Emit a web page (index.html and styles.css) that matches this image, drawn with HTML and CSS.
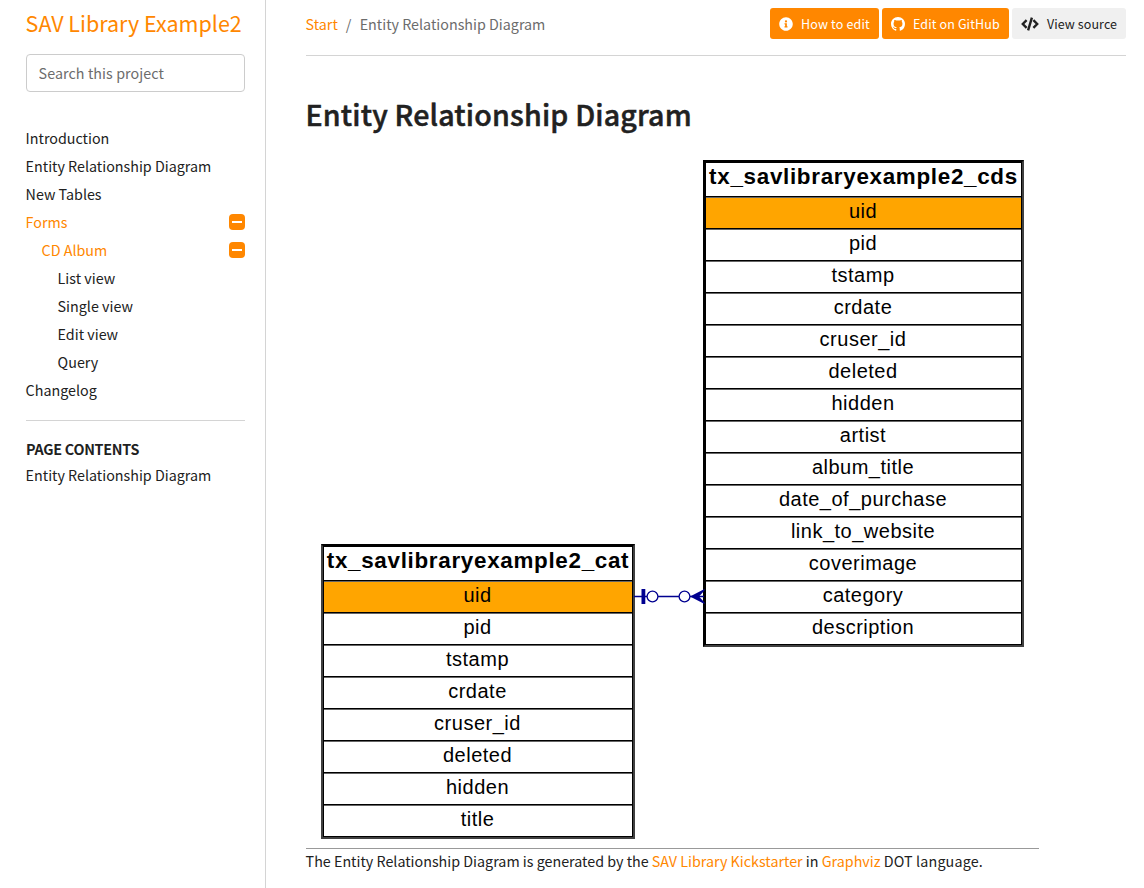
FILE: index.html
```
<!DOCTYPE html>
<html lang="en">
<head>
<meta charset="utf-8">
<title>Entity Relationship Diagram</title>
<link rel="stylesheet" href="styles.css">
</head>
<body>
<div class="page">
  <aside class="sidebar">
    <a class="brand"><span>SAV Library Example2</span></a>
    <input class="search" type="text" placeholder="Search this project">
    <nav class="menu">
      <a><span>Introduction</span></a>
      <a><span>Entity Relationship Diagram</span></a>
      <a><span>New Tables</span></a>
      <a class="active"><span>Forms</span><i class="toggle"></i></a>
      <a class="active level2"><span>CD Album</span><i class="toggle"></i></a>
      <a class="level3"><span>List view</span></a>
      <a class="level3"><span>Single view</span></a>
      <a class="level3"><span>Edit view</span></a>
      <a class="level3"><span>Query</span></a>
      <a><span>Changelog</span></a>
    </nav>
    <div class="contents">
      <p class="contents-title"><span>PAGE CONTENTS</span></p>
      <a><span>Entity Relationship Diagram</span></a>
    </div>
  </aside>
  <main class="main">
    <header class="topbar">
      <div class="crumbs"><a class="link">Start</a><span class="slash">/</span><span>Entity Relationship Diagram</span></div>
      <div class="buttons">
        <a class="btn"><svg width="14" height="14" viewBox="0 0 512 512"><path fill="currentColor" d="M256 8C119 8 8 119 8 256s111 248 248 248 248-111 248-248S393 8 256 8zm0 110a42 42 0 1 1 0 84 42 42 0 0 1 0-84zm56 254c0 7-5 12-12 12h-88c-7 0-12-5-12-12v-24c0-7 5-12 12-12h12v-64h-12c-7 0-12-5-12-12v-24c0-7 5-12 12-12h64c7 0 12 5 12 12v100h12c7 0 12 5 12 12v24z"/></svg><span>How to edit</span></a>
        <a class="btn btn-github"><svg width="14" height="14" viewBox="0 0 16 16"><path fill="currentColor" d="M8 0C3.58 0 0 3.58 0 8c0 3.54 2.29 6.53 5.47 7.59.4.07.55-.17.55-.38 0-.19-.01-.82-.01-1.49-2.01.37-2.53-.49-2.69-.94-.09-.23-.48-.94-.82-1.13-.28-.15-.68-.52-.01-.53.63-.01 1.08.58 1.23.82.72 1.21 1.87.87 2.33.66.07-.52.28-.87.51-1.07-1.78-.2-3.64-.89-3.64-3.95 0-.87.31-1.59.82-2.15-.08-.2-.36-1.02.08-2.12 0 0 .67-.21 2.2.82A7.6 7.6 0 0 1 8 3.86c.68 0 1.36.09 2 .27 1.53-1.04 2.2-.82 2.2-.82.44 1.1.16 1.92.08 2.12.51.56.82 1.27.82 2.15 0 3.07-1.87 3.75-3.65 3.95.29.25.54.73.54 1.48 0 1.07-.01 1.93-.01 2.2 0 .21.15.46.55.38A8.01 8.01 0 0 0 16 8c0-4.42-3.58-8-8-8z"/></svg><span>Edit on GitHub</span></a>
        <a class="btn btn-light"><svg width="18" height="14" viewBox="0 0 18 14"><g fill="none" stroke="currentColor" stroke-width="2.4"><path d="M5.6 3.1 1.8 7l3.8 3.9M12.4 3.1 16.2 7l-3.8 3.9M10.9.6 7.1 13.4"/></g></svg><span>View source</span></a>
      </div>
    </header>
    <h1><span>Entity Relationship Diagram</span></h1>
    <div class="diagram">
      <div class="entity cds">
        <b>tx_savlibraryexample2_cds</b>
        <span class="key">uid</span><span>pid</span><span>tstamp</span><span>crdate</span><span>cruser_id</span><span>deleted</span><span>hidden</span><span>artist</span><span>album_title</span><span>date_of_purchase</span><span>link_to_website</span><span>coverimage</span><span>category</span><span>description</span>
      </div>
      <div class="entity cat">
        <b>tx_savlibraryexample2_cat</b>
        <span class="key">uid</span><span>pid</span><span>tstamp</span><span>crdate</span><span>cruser_id</span><span>deleted</span><span>hidden</span><span>title</span>
      </div>
      <svg class="edge" width="72" height="20" viewBox="0 0 72 20"><g fill="none" stroke="#000090" stroke-width="1.3"><path d="M0 10.5h13M24 10.5h21M56 10.5h14"/><circle cx="18.5" cy="10.5" r="5.400"/><circle cx="50.500" cy="10.500" r="5.400"/></g><path fill="#000090" d="M7.500 3h3.800v15H7.500zM56 10.500 70.500 3v1.500L65 10.500l5.500 6V18z"/></svg>
    </div>
    <p class="note"><span>The Entity Relationship Diagram is generated by the <a class="link">SAV Library Kickstarter</a> in <a class="link">Graphviz</a> <span class="tail">DOT language.</span></span></p>
  </main>
</div>
</body>
</html>
```
FILE: styles.css
```
* { box-sizing: border-box; }
body { margin: 0; background: #fff; color: #212121; font: 14.3px/28px "Noto Sans CJK SC", sans-serif; }
.page { display: flex; height: 888px; overflow: hidden; }
.sidebar { width: 266px; flex: none; padding: 7px 20px 0 25.6px; border-right: 1px solid #d4d4d4; }
.brand { display: block; color: #ff8700; font-size: 21.5px; line-height: 32px; white-space: nowrap; }
.search { display: block; width: 219px; height: 38px; margin: 15px 0 32px 0.4px; padding: 0 11.6px 2px; border: 1px solid #ccc; border-radius: 4px; font: inherit; letter-spacing: 0.07px; color: #666; }
.search::placeholder { color: #6c6c6c; opacity: 1; }
.menu a { display: flex; justify-content: space-between; align-items: center; height: 28px; }
.menu .active, .link { color: #ff8700; }
.menu .level2 { padding-left: 16px; }
.menu .level3 { padding-left: 32px; }
.toggle { display: flex; align-items: center; justify-content: center; width: 16px; height: 16px; border-radius: 4px; background: #ff8700; }
.toggle::after { content: ""; width: 10px; height: 2px; background: #fff; }
.contents { margin: 16px 0 0 0.4px; padding-top: 15px; border-top: 1px solid #d4d4d4; line-height: 26px; }
.contents p { margin: 0; font-weight: 700; letter-spacing: -0.24px; }
.contents a { margin-left: -0.4px; }
.main { flex: 1; padding: 0 18px 0 40px; }
.topbar { display: flex; justify-content: space-between; height: 56px; padding-top: 8px; border-bottom: 1px solid #d4d4d4; }
.crumbs { line-height: 32px; color: #6c6c6c; margin-left: -0.4px; }
.slash { padding: 0 8.3px 0 8px; }
.buttons { display: flex; gap: 3px; }
.btn { display: flex; align-items: center; gap: 8px; width: 109px; height: 31px; padding: 0 0 0 9px; border-radius: 3px; background: #ff8700; color: #fff; font-size: 12.5px; letter-spacing: 0.16px; white-space: nowrap; }
.btn-github { width: 127px; letter-spacing: 0.12px; }
.btn-light { width: 114px; background: #f0f0f0; color: #212121; letter-spacing: 0.08px; }
h1 { margin: 38px 0 1px -0.6px; font-size: 28.6px; line-height: 40px; font-weight: 500; letter-spacing: 0.18px; -webkit-text-stroke: 0.5px #212121; }
.diagram { position: relative; width: 733px; height: 714px; margin-bottom: -2px; border-bottom: 1px solid #999; }
.entity { position: absolute; padding: 1px; border: 2px solid #404040; border-top-color: #000; background: #000; color: #000; font: 20px/28px "Liberation Sans", Arial, sans-serif; letter-spacing: 0.5px; text-align: center; }
.entity b { display: block; height: 33px; background: #fff; font-size: 22.4px; line-height: 27px; letter-spacing: 0.7px; white-space: nowrap; }
.entity span { display: block; height: 32px; padding-right: 1px; border-top: 1px solid #000; box-shadow: inset 0 1px #666; background: #fff; }
.entity .key { background: #ffa500; }
.cds { left: 397px; top: 25px; width: 321px; height: 487px; border-left-color: #000; }
.cat { left: 15px; top: 409px; width: 314px; height: 295px; }
.edge { position: absolute; left: 328px; top: 451px; }
.note { margin: 0 0 0 -0.4px; line-height: 28px; white-space: nowrap; }
.tail { letter-spacing: 0.15px; }
```
